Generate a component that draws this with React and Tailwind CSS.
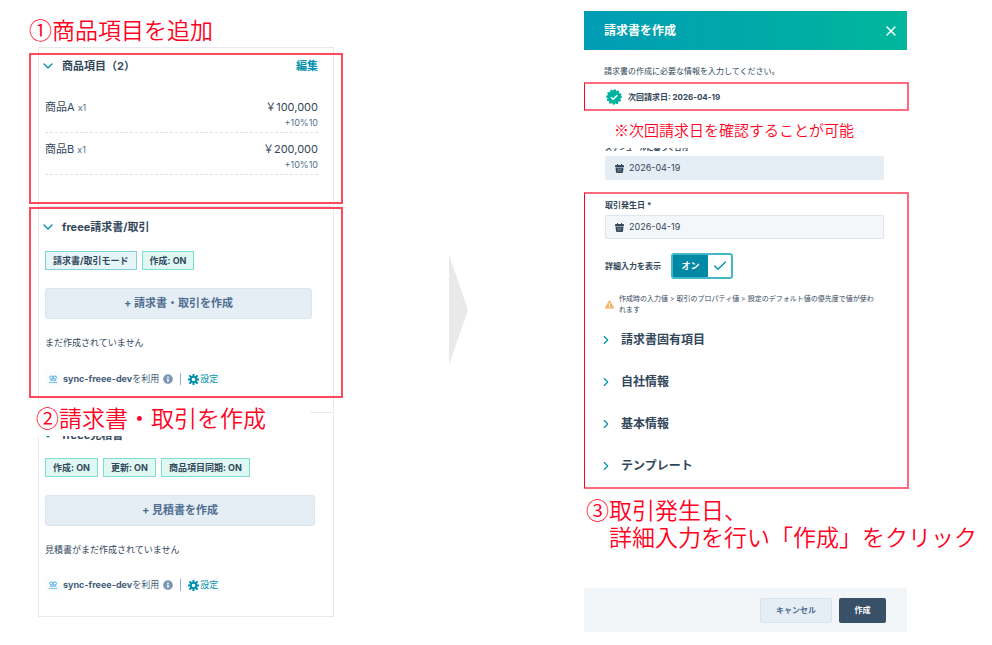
import React, { useState } from "react";
import { ChevronDown, ChevronRight, Check, X } from "lucide-react";
import { FaInfoCircle, FaExclamationTriangle } from "react-icons/fa";

const lineItems = [
  { name: "商品A", qty: "x1", price: "￥100,000", tax: "+10%10" },
  { name: "商品B", qty: "x1", price: "￥200,000", tax: "+10%10" },
];

const detailSections = ["請求書固有項目", "自社情報", "基本情報", "テンプレート"];

const CalendarIcon = () => (
  <svg viewBox="0 0 18 18" className="size-[9px] shrink-0" aria-hidden="true">
    <path
      fill="#33475b"
      d="M4 0h2v2h6V0h2v2h2a2 2 0 0 1 2 2v2H0V4a2 2 0 0 1 2-2h2zM1 7h16l-1 9a2 2 0 0 1-2 2H4a2 2 0 0 1-2-2z"
    />
    <path
      stroke="#8495a6"
      strokeWidth="1"
      d="M4 10.500h10M4 14h7M7 8.500v8M11 8.500v8"
    />
  </svg>
);

const VerifiedIcon = () => (
  <svg viewBox="0 0 32 32" className="size-[16px] shrink-0" aria-hidden="true">
    <circle cx="16" cy="16" r="13" fill="#00b3a0" />
    <circle
      cx="16"
      cy="16"
      r="13"
      fill="none"
      stroke="#00b3a0"
      strokeWidth="5.500"
      strokeLinecap="round"
      strokeDasharray="0 6.807"
    />
    <path
      d="M10 16.500l4.500 4 8-8"
      fill="none"
      stroke="#fff"
      strokeWidth="3"
    />
  </svg>
);

const GearIcon = () => (
  <svg viewBox="0 0 22 22" className="size-[11px] shrink-0" aria-hidden="true">
    <g fill="none" stroke="#0091ae">
      <circle cx="11" cy="11" r="5.500" strokeWidth="4" />
      <path
        d="M11 1v3M11 18v3M1 11h3M18 11h3M4 4l2 2M16 16l2 2M4 18l2-2M16 6l2-2"
        strokeWidth="4"
        strokeLinecap="round"
      />
    </g>
  </svg>
);

const SyncLogo = () => (
  <svg viewBox="0 0 16 16" className="size-4 shrink-0" aria-hidden="true">
    <rect width="16" height="16" fill="#fafcfe" />
    <g fill="none" stroke="#4aa8ea" strokeWidth="1">
      <ellipse cx="6.500" cy="6.500" rx="1.800" ry="1.500" />
      <ellipse cx="9.700" cy="6.500" rx="1.800" ry="1.500" />
      <path d="M5 9.200h6.300" />
      <path d="M4.200 11.500h7.800" strokeDasharray="1.500 .6" />
    </g>
  </svg>
);

const Frame = ({ className }) => (
  <div
    className={`pointer-events-none absolute border-2 border-[#ff4a5e] ${className}`}
  />
);

const Note = ({ children, className }) => (
  <p
    className={`whitespace-nowrap font-['Liberation_Sans','Noto_Sans_CJK_JP',sans-serif] font-[350] text-[#ff0022] ${className}`}
  >
    {children}
  </p>
);

const Tag = ({ children, blue }) => (
  <span
    className={`flex h-[19px] items-center border px-[7px] text-[9px] font-bold ${
      blue ? "border-[#7fd1de] bg-[#e5f5f8]" : "border-[#7fded2] bg-[#e0f8f4]"
    }`}
  >
    {children}
  </span>
);

const SectionTitle = ({ children }) => (
  <h2 className="-ml-[5px] text-[11px] font-bold leading-5">
    <button type="button" className="flex items-center gap-[6px]">
      <ChevronDown size={16} className="text-[#0091ae]" />
      {children}
    </button>
  </h2>
);

const AccountRow = () => (
  <div className="flex h-4 items-center text-[9px]">
    <SyncLogo />
    <span className="ml-[2px] whitespace-nowrap text-[#425b76]">
      <b className="font-bold">sync-freee-dev</b>を利用
    </span>
    <FaInfoCircle size={10} className="ml-1 text-[#7c98b6]" />
    <span className="mx-[7px] h-3 w-px bg-[#99acc2]" />
    <a href="#settings" className="flex items-center gap-px text-[#0091ae]">
      <GearIcon />
      設定
    </a>
  </div>
);

const DealCard = () => (
  <div className="mx-[9px] border border-[#e6e9ed]">
    {/* 商品項目 */}
    <section className="relative border-b border-[#dfe6ee] pb-[31px] pl-[6px] pr-[15px] pt-[8px]">
      <div className="flex items-center justify-between">
        <SectionTitle>商品項目（2）</SectionTitle>
        <a href="#edit" className="text-[11px] font-bold text-[#0091ae]">
          編集
        </a>
      </div>
      <ul className="mt-[15px]">
        {lineItems.map((item) => (
          <li
            key={item.name}
            className="flex justify-between border-b border-dashed border-[#dbe2ea] pb-px pt-[8px] leading-4"
          >
            <p className="text-[11px]">
              {item.name}{" "}
              <span className="text-[9px] text-[#516f90]">{item.qty}</span>
            </p>
            <div className="text-right">
              <p className="text-[11px]">{item.price}</p>
              <p className="text-[9px] leading-4 text-[#516f90]">{item.tax}</p>
            </div>
          </li>
        ))}
      </ul>
      <Frame className="-inset-x-[10px] bottom-[2px] top-[5px]" />
    </section>

    {/* freee請求書/取引 */}
    <section className="relative border-b border-[#e6e9ed] pb-[25px] pl-[6px] pr-[21px] pt-[10px]">
      <SectionTitle>freee請求書/取引</SectionTitle>
      <div className="mt-[14px] flex gap-[5px]">
        <Tag blue>請求書/取引モード</Tag>
        <Tag>作成: ON</Tag>
      </div>
      <button
        type="button"
        className="mt-[18px] h-[31px] w-full rounded-[3px] border border-[#dbe5ef] bg-[#e5edf5] text-[11px] font-bold text-[#506e91]"
      >
        + 請求書・取引を作成
      </button>
      <p className="mb-[20px] mt-[16px] text-[9px] leading-4">
        まだ作成されていません
      </p>
      <AccountRow />
      <Frame className="-inset-x-[10px] bottom-[14px] top-0" />
    </section>

    {/* freee見積書 */}
    <section className="relative pb-[23px] pl-[6px] pr-[18px] pt-[12px]">
      <SectionTitle>freee見積書</SectionTitle>
      <div className="mt-[13px] flex gap-[5px]">
        <Tag>作成: ON</Tag>
        <Tag>更新: ON</Tag>
        <Tag>商品項目同期: ON</Tag>
      </div>
      <button
        type="button"
        className="mt-[18px] h-[31px] w-full rounded-[3px] border border-[#dbe5ef] bg-[#e5edf5] text-[11px] font-bold text-[#506e91]"
      >
        + 見積書を作成
      </button>
      <p className="mb-[19px] mt-[16px] text-[9px] leading-4">
        見積書がまだ作成されていません
      </p>
      <AccountRow />
      <Note className="absolute -left-[10px] -top-[10px] h-[33px] w-[281px] bg-white pl-[7px] text-[23px] leading-[33px]">
        ②請求書・取引を作成
      </Note>
    </section>
  </div>
);

const InvoiceDialog = () => {
  const [scheduled, setScheduled] = useState("2026-04-19");
  const [issued, setIssued] = useState("2026-04-19");
  const [detail, setDetail] = useState(true);

  return (
    <div role="dialog" aria-labelledby="dialog-title">
      <header className="mr-[65px] flex h-[39px] items-center justify-between bg-linear-to-r from-[#009cb5] to-[#00b69b] pl-[20px] pr-[8px] text-white">
        <h1 id="dialog-title" className="text-[12px] font-bold">
          請求書を作成
        </h1>
        <button type="button" aria-label="閉じる">
          <X size={16} strokeWidth={2} />
        </button>
      </header>

      <div className="mr-[63px]">
        <p className="pb-[3px] pl-[20px] pt-[13px] text-[8px] leading-4">
          請求書の作成に必要な情報を入力してください。
        </p>

        <div className="flex h-[29px] items-center gap-[6px] border-2 border-l border-[#ff6b7c] border-l-[#ff0022] pl-[21px] text-[8px] font-bold">
          <VerifiedIcon />
          <span>次回請求日: 2026-04-19</span>
        </div>

        {/* 次回請求日 */}
        <div className="relative pl-[21px] pr-[25px] pt-[29px]">
          <label
            htmlFor="scheduled"
            className="block text-[7px] font-bold leading-4"
          >
            スケジュールに基づく日付
          </label>
          <div className="flex h-[24px] items-center gap-[5px] rounded-[2px] bg-[#e5edf5] px-[10px]">
            <CalendarIcon />
            <input
              id="scheduled"
              type="text"
              value={scheduled}
              onChange={(e) => setScheduled(e.target.value)}
              className="w-full bg-transparent text-[9px] outline-none"
            />
          </div>
          <Note className="absolute inset-x-0 top-[2px] h-[35px] bg-white pl-[30px] text-[15px] leading-[35px]">
            ※次回請求日を確認することが可能
          </Note>
        </div>

        {/* 取引発生日・詳細入力 */}
        <div className="mt-[12px] border-2 border-l border-[#ff6b7c] border-l-[#ff0022] pb-[11px] pl-[20px] pr-[23px] pt-[3px]">
          <label
            htmlFor="issued"
            className="block pb-[2px] text-[8px] font-bold leading-4"
          >
            取引発生日 *
          </label>
          <div className="flex h-[24px] items-center gap-[5px] rounded-[2px] border border-[#dde5ed] bg-[#f4f7fa] px-[9px]">
            <CalendarIcon />
            <input
              id="issued"
              type="text"
              value={issued}
              onChange={(e) => setIssued(e.target.value)}
              className="w-full bg-transparent text-[9px] outline-none"
            />
          </div>

          <div className="mt-[14px] flex items-center gap-[10px]">
            <label htmlFor="detail" className="text-[8px] font-bold">
              詳細入力を表示
            </label>
            <button
              id="detail"
              type="button"
              role="switch"
              aria-checked={detail}
              onClick={() => setDetail(!detail)}
              className="flex h-[26px] w-[62px] items-center rounded-[3px] border-2 border-[#45b8c8] bg-white"
            >
              <span className="flex h-full w-[35px] items-center justify-center bg-[#0088a5] text-[9px] font-bold text-white">
                オン
              </span>
              <span className="flex flex-1 justify-center text-[#0091ae]">
                <Check size={16} strokeWidth={2} />
              </span>
            </button>
          </div>

          <div className="mt-[14px] flex items-center gap-[5px] pr-[5px] text-[7px] leading-[11px]">
            <FaExclamationTriangle size={9} className="shrink-0 text-[#f8b264]" />
            <p>
              作成時の入力値 &gt; 取引のプロパティ値 &gt;
              設定のデフォルト値の優先度で値が使われます
            </p>
          </div>

          <ul className="mt-[15px] space-y-[22px] text-[12px] font-bold">
            {detailSections.map((label) => (
              <li key={label} className="flex">
                <button
                  type="button"
                  className="-ml-[6px] flex h-5 items-center gap-[8px]"
                >
                  <ChevronRight size={14} className="text-[#0091ae]" />
                  {label}
                </button>
              </li>
            ))}
          </ul>
        </div>
      </div>

      <Note className="pl-[2px] pt-[9px] text-[23px] leading-[27px]">
        ③取引発生日、
        <br />
        <span className="pl-[23px]">詳細入力を行い「作成」をクリック</span>
      </Note>

      <footer className="mr-[65px] mt-[36px] flex h-[44px] items-center justify-end gap-[7px] bg-[#f3f6f9] pr-[21px] text-[8px] font-bold">
        <button
          type="button"
          className="h-[25px] w-[72px] rounded-[2px] border border-[#d8e3ee] bg-[#e5edf5] text-[#506e91]"
        >
          キャンセル
        </button>
        <button
          type="button"
          className="h-[25px] w-[47px] rounded-[2px] bg-[#385068] text-white"
        >
          作成
        </button>
      </footer>
    </div>
  );
};

const App = () => (
  <main className="grid min-h-screen grid-cols-[314fr_241fr_388fr] bg-white pl-[29px] pr-[20px] font-['Inter','Noto_Sans_CJK_JP',sans-serif] text-[#33475b]">
    <div className="min-w-0 pt-[15px]">
      <Note className="text-[23px] leading-8">①商品項目を追加</Note>
      <DealCard />
    </div>
    <svg
      viewBox="0 0 20 110"
      className="mr-[10px] mt-[255px] h-[110px] w-5 justify-self-center"
      aria-hidden="true"
    >
      <path d="M0 0L19 55L0 110z" fill="#e9e9e9" />
    </svg>
    <div className="min-w-0 pt-[11px]">
      <InvoiceDialog />
    </div>
  </main>
);

export default App;
